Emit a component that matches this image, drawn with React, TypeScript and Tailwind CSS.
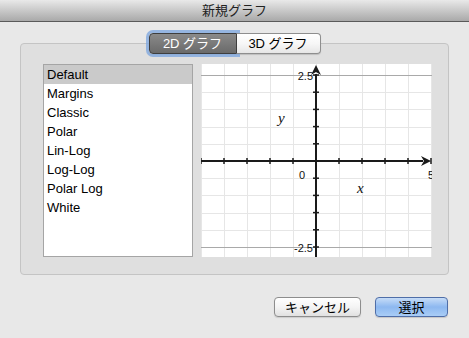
import * as React from "react";

const styles = ["Default", "Margins", "Classic", "Polar", "Lin-Log", "Log-Log", "Polar Log", "White"];

const ui = {
  fontFamily: '"Liberation Sans", "Noto Sans CJK JP", Arial, sans-serif',
};

function Graph() {
  const cx = 115;
  const cy = 97;
  const dx = 23;
  const dy = 17.2;
  const xs = Array.from({ length: 11 }, (_, i) => cx + (i - 5) * dx);
  const ys = Array.from({ length: 11 }, (_, i) => cy + (i - 5) * dy);
  return (
    <svg width="231" height="193" viewBox="0 0 231 193" className="block bg-white">
      {xs.map((x) => (
        <line key={"v" + x} x1={x + 0.5} y1={0} x2={x + 0.5} y2={193} stroke="#e6e6e6" strokeWidth="1" />
      ))}
      {ys.map((y, i) => (
        <line
          key={"h" + y}
          x1={0}
          y1={Math.round(y) + 0.5}
          x2={231}
          y2={Math.round(y) + 0.5}
          stroke={i === 0 || i === 10 ? "#a9a9a9" : "#e6e6e6"}
          strokeWidth="1"
        />
      ))}
      {/* axes */}
      <line x1={0} y1={cy} x2={222} y2={cy} stroke="#1a1a1a" strokeWidth="2" />
      <line x1={cx} y1={10} x2={cx} y2={193} stroke="#1a1a1a" strokeWidth="2" />
      <path d={`M230 ${cy} L220 ${cy - 5} L223 ${cy} L220 ${cy + 5} Z`} fill="#1a1a1a" />
      <path d={`M${cx} 1 L${cx - 5} 11 L${cx} 8 L${cx + 5} 11 Z`} fill="#1a1a1a" />
      {xs.map((x) => (
        <line key={"tx" + x} x1={x} y1={cy - 3} x2={x} y2={cy + 3} stroke="#1a1a1a" strokeWidth="1.5" />
      ))}
      {ys.map((y) => (
        <line key={"ty" + y} x1={cx - 3} y1={y} x2={cx + 3} y2={y} stroke="#1a1a1a" strokeWidth="1.5" />
      ))}
      <g fontFamily='"Liberation Sans", Arial, sans-serif' fontSize="11" fill="#111">
        <text x={112} y={16} textAnchor="end">2.5</text>
        <text x={112} y={188} textAnchor="end">-2.5</text>
        <text x={104} y={115} textAnchor="end">0</text>
        <text x={0} y={115} textAnchor="end">-5</text>
        <text x={-3} y={115} dx="0">{""}</text>
        <text x={227} y={115}>5</text>
      </g>
      <g fontFamily='"Liberation Serif", "Times New Roman", serif' fontSize="15" fontStyle="italic" fill="#111">
        <text x={77} y={59}>y</text>
        <text x={156} y={129}>x</text>
      </g>
    </svg>
  );
}

export default function App() {
  const [active, setActive] = React.useState(0);
  return (
    <div className="w-[469px] h-[338px] flex flex-col bg-[#e8e8e8] overflow-hidden text-[13px] text-black" style={ui}>
      <div className="h-[22px] flex-none flex items-center justify-center border-b border-[#5a5a5a] bg-gradient-to-b from-[#e9e9e9] to-[#a9a9a9] text-[13px] text-[#222]">
        新規グラフ
      </div>

      <div className="flex-1 flex flex-col px-5 pt-[11px]">
        <div className="relative z-10 flex justify-center">
          <div className="flex h-[21px] rounded-[4px] shadow-[0_1px_1px_rgba(0,0,0,0.15)]">
            <button
              type="button"
              className="w-[88px] rounded-l-[4px] border border-[#3e3e3e] bg-gradient-to-b from-[#8a8a8a] to-[#6a6a6a] text-white text-[13px] leading-none ring-[3px] ring-[#7fa8de]/80"
            >
              2D グラフ
            </button>
            <button
              type="button"
              className="w-[84px] rounded-r-[4px] border border-l-0 border-[#8e8e8e] bg-gradient-to-b from-white via-[#f7f7f7] to-[#e6e6e6] text-[13px] leading-none text-black"
            >
              3D グラフ
            </button>
          </div>
        </div>

        <div className="-mt-[11px] h-[232px] rounded-[4px] border border-[#c4c4c4] bg-[#dfdfdf] flex gap-2 pl-[22px] pt-5">
          <ul className="w-[150px] h-[193px] bg-white border border-[#a5a5a5] flex flex-col">
            {styles.map((s, i) => (
              <li
                key={s}
                onClick={() => setActive(i)}
                className={"h-[19px] flex items-center pl-[3px] " + (i === active ? "bg-[#cacaca]" : "")}
              >
                {s}
              </li>
            ))}
          </ul>
          <Graph />
        </div>

        <div className="flex justify-end gap-[14px] mt-[22px] pr-px">
          <button
            type="button"
            className="w-[87px] h-[20px] rounded-[4px] border border-[#8d8d8d] bg-gradient-to-b from-white via-[#f4f4f4] to-[#e1e1e1] text-[13px] leading-none shadow-[0_1px_1px_rgba(0,0,0,0.12)]"
          >
            キャンセル
          </button>
          <button
            type="button"
            className="w-[73px] h-[20px] rounded-[4px] border border-[#4f6ea8] bg-gradient-to-b from-[#c6dcf7] via-[#8db8f0] to-[#a9cdf6] text-[13px] leading-none shadow-[0_1px_1px_rgba(0,0,0,0.15)]"
          >
            選択
          </button>
        </div>
      </div>
    </div>
  );
}
